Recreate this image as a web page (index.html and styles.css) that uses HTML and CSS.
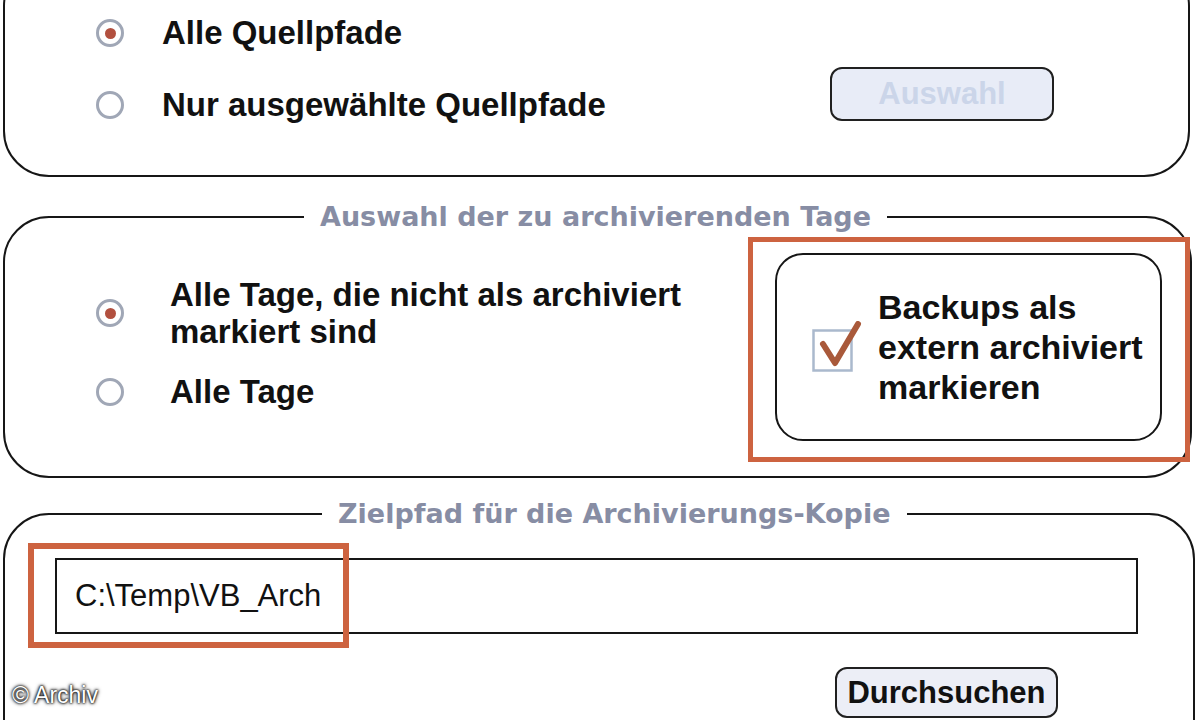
FILE: index.html
```html
<!DOCTYPE html>
<html lang="de">
<head>
<meta charset="utf-8">
<title>Archivierung</title>
<link rel="stylesheet" href="styles.css">
</head>
<body>
<div class="page">
  <fieldset class="group g1">
    <div class="g1-body">
      <div class="radios r1">
        <div class="opt"><span class="radio on"></span><span>Alle Quellpfade</span></div>
        <div class="opt"><span class="radio"></span><span>Nur ausgewählte Quellpfade</span></div>
      </div>
      <button class="btn disabled" type="button">Auswahl</button>
    </div>
  </fieldset>

  <fieldset class="group g2">
    <legend>Auswahl der zu archivierenden Tage</legend>
    <div class="g2-body">
      <div class="radios r2">
        <div class="opt"><span class="radio on"></span><span>Alle Tage, die nicht als archiviert<br>markiert sind</span></div>
        <div class="opt"><span class="radio"></span><span>Alle Tage</span></div>
      </div>
      <div class="highlight">
        <div class="checkgroup">
          <svg class="check" width="50" height="52" viewBox="0 0 50 52">
            <rect x="1.5" y="9.5" width="38" height="40" fill="#fff" stroke="#aab9cd" stroke-width="2.5"/>
            <path d="M11 23 L23 42 L46 3" fill="none" stroke="#a9593a" stroke-width="6" stroke-linecap="round" stroke-linejoin="round"/>
          </svg>
          <div class="checktext">Backups als<br>extern archiviert<br>markieren</div>
        </div>
      </div>
    </div>
  </fieldset>

  <fieldset class="group g3">
    <legend>Zielpfad für die Archivierungs-Kopie</legend>
    <div class="g3-body">
      <div class="pathwrap">
        <div class="path">C:\Temp\VB_Arch</div>
        <div class="mark"></div>
      </div>
      <div class="actions">
        <button class="btn" type="button">Durchsuchen</button>
      </div>
    </div>
  </fieldset>

  <div class="credit">© Archiv</div>
</div>
</body>
</html>
```

FILE: styles.css
```css
* { box-sizing: border-box; }

html, body {
  margin: 0;
  padding: 0;
  background: #ffffff;
}

body {
  width: 1200px;
  height: 720px;
  overflow: hidden;
  font-family: "Liberation Sans", Arial, sans-serif;
  color: #111111;
}

.page {
  position: relative;
  display: flow-root;
  width: 1200px;
  height: 720px;
  overflow: hidden;
}

.group {
  margin: 0 0 0 3px;
  border: 2px solid #161616;
  border-radius: 46px;
  padding: 0;
  min-width: 0;
}

.group legend {
  padding: 0 16px;
  font-family: "DejaVu Sans", Verdana, sans-serif;
  font-weight: bold;
  font-size: 27px;
  line-height: 32px;
  color: #878da4;
}

/* group 1 */
.g1 {
  width: 1187px;
  height: 217px;
  margin-top: -40px;
  padding: 51px 0 0 91px;
}

.g1-body {
  display: flex;
  justify-content: space-between;
  align-items: flex-start;
}

.radios {
  display: flex;
  flex-direction: column;
}

.r1 { gap: 32px; }

.opt {
  display: flex;
  align-items: center;
  font-weight: bold;
  font-size: 33px;
  line-height: 40px;
  white-space: nowrap;
}

.r1 .opt { gap: 38px; }

.radio {
  flex: none;
  width: 28px;
  height: 28px;
  border-radius: 50%;
  border: 3px solid #a0a7b6;
  background: #ffffff;
  display: flex;
  align-items: center;
  justify-content: center;
}

.radio.on::after {
  content: "";
  width: 11px;
  height: 11px;
  border-radius: 50%;
  background: #b2503f;
}

.btn {
  font-family: "Liberation Sans", Arial, sans-serif;
  font-weight: bold;
  font-size: 31px;
  color: #111111;
  background: #eceef6;
  border: 2px solid #202020;
  border-radius: 12px;
  padding: 0;
}

.btn.disabled {
  margin-top: 54px;
  margin-right: 134px;
  width: 224px;
  height: 54px;
  background: #e8ecf7;
  color: #cbd5e9;
}

/* group 2 */
.g2 {
  width: 1189px;
  height: 277px;
  margin-top: 24px;
}

.g2 legend {
  margin-left: 299px;
}

.g2-body {
  display: flex;
  justify-content: space-between;
  align-items: flex-start;
  padding: 4px 0 0 91px;
}

.r2 {
  margin-top: 39px;
  gap: 23px;
}

.r2 .opt {
  gap: 46px;
  line-height: 37px;
}

.highlight {
  width: 442px;
  height: 225px;
  border: 5px solid #cd6340;
  padding: 11px 23px 16px 22px;
}

.checkgroup {
  height: 100%;
  border: 2px solid #161616;
  border-radius: 28px;
  display: flex;
  align-items: center;
  padding-left: 35px;
  gap: 16px;
}

.check {
  flex: none;
  display: block;
}

.checktext {
  font-weight: bold;
  font-size: 34px;
  line-height: 40px;
  white-space: nowrap;
}

/* group 3 */
.g3 {
  width: 1192px;
  height: 300px;
  margin-top: 20px;
}

.g3 legend {
  margin-left: 317px;
}

.g3-body {
  padding: 28px 55px 0 50px;
}

.pathwrap {
  position: relative;
}

.path {
  height: 76px;
  border: 2px solid #161616;
  background: #ffffff;
  display: flex;
  align-items: center;
  padding-left: 18px;
  font-size: 31px;
  color: #111111;
}

.mark {
  position: absolute;
  left: -27px;
  top: -15px;
  width: 321px;
  height: 105px;
  border: 6px solid #cd6340;
}

.actions {
  display: flex;
  justify-content: flex-end;
  padding-right: 80px;
  margin-top: 33px;
}

.actions .btn {
  width: 223px;
  height: 51px;
}

.credit {
  position: absolute;
  left: 12px;
  top: 682px;
  font-family: "Liberation Sans", Arial, sans-serif;
  font-size: 23px;
  color: #ffffff;
  text-shadow: 0 0 2px #000, 0 0 3px #000, 0 0 4px #333;
}
```
